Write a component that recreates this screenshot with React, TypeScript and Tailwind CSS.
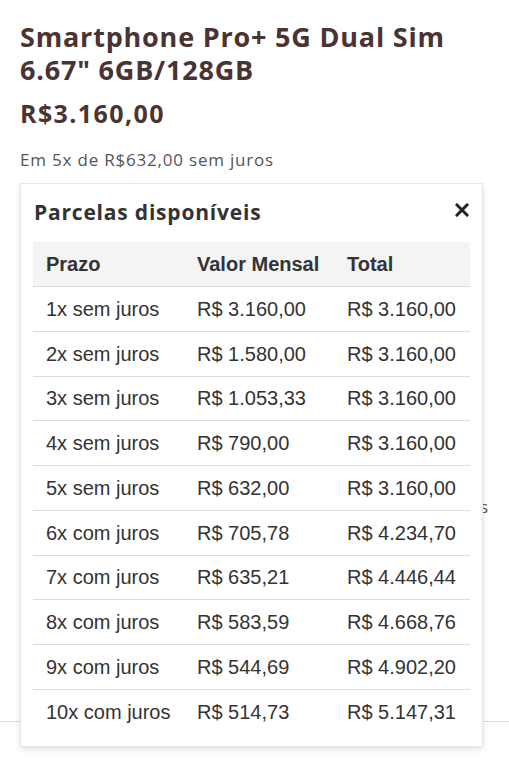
import React from "react";

const rows = [
	["1x sem juros", "R$ 3.160,00", "R$ 3.160,00"],
	["2x sem juros", "R$ 1.580,00", "R$ 3.160,00"],
	["3x sem juros", "R$ 1.053,33", "R$ 3.160,00"],
	["4x sem juros", "R$ 790,00", "R$ 3.160,00"],
	["5x sem juros", "R$ 632,00", "R$ 3.160,00"],
	["6x com juros", "R$ 705,78", "R$ 4.234,70"],
	["7x com juros", "R$ 635,21", "R$ 4.446,44"],
	["8x com juros", "R$ 583,59", "R$ 4.668,76"],
	["9x com juros", "R$ 544,69", "R$ 4.902,20"],
	["10x com juros", "R$ 514,73", "R$ 5.147,31"],
];

const CloseIcon = () => (
	<svg width="14" height="14" viewBox="0 0 14 14" fill="none">
		<path d="M2 2L12 12M12 2L2 12" stroke="#222" strokeWidth="3" strokeLinecap="square" />
	</svg>
);

export default function App() {
	return (
		<div className="relative w-[509px] h-[766px] overflow-hidden bg-white font-['Open_Sans',sans-serif]">
			{/* Conteúdo do produto */}
			<div className="px-5 pt-5">
				<h1 className="text-[27px] leading-[33px] font-bold text-[#4a3333] tracking-[0.8px]">
					Smartphone Pro+ 5G Dual Sim 6.67" 6GB/128GB
				</h1>
				<p className="mt-3 text-[25px] leading-[30px] font-bold text-[#4a3333] tracking-[1.4px]">R$3.160,00</p>
				<p className="mt-5 text-[17px] leading-[24px] text-[#555] tracking-[0.8px]">Em 5x de R$632,00 sem juros</p>
				<p className="mt-[323px] text-right text-[17px] leading-[24px] text-[#555] tracking-[0.8px]">
					Ver todas as formas de pagamento disponíveis
				</p>
			</div>
			<div className="mt-[202px] border-t border-[#ddd]" />

			{/* Popup de parcelas */}
			<div className="absolute left-5 top-[183px] w-[463px] bg-white border border-[#e6e6e6] shadow-[0_2px_6px_rgba(0,0,0,0.12)] px-3 pt-[14px] pb-3">
				<div className="flex items-center justify-between pl-[1px] pr-[1px]">
					<h2 className="text-[21px] leading-[28px] font-bold text-[#333] tracking-[0.8px]">Parcelas disponíveis</h2>
					<button className="flex items-center justify-center -mt-1">
						<CloseIcon />
					</button>
				</div>
				<div className="mt-4 font-['Liberation_Sans',Arial,sans-serif] text-[20px] text-[#333]">
					<div className="grid grid-cols-[151px_150px_136px] h-[45px] items-center bg-[#f4f4f4] border-b border-[#ddd] font-bold">
						<span className="pl-[13px]">Prazo</span>
						<span className="pl-[13px]">Valor Mensal</span>
						<span className="pl-[13px]">Total</span>
					</div>
					{rows.map((row, index) => (
						<div
							key={row[0]}
							className={`grid grid-cols-[151px_150px_136px] items-center ${
								index === rows.length - 1 ? "h-[44px]" : "h-[44.75px] border-b border-[#ddd]"
							}`}
						>
							{row.map((cell) => (
								<span key={cell} className="pl-[13px] whitespace-nowrap">
									{cell}
								</span>
							))}
						</div>
					))}
				</div>
			</div>
		</div>
	);
}
